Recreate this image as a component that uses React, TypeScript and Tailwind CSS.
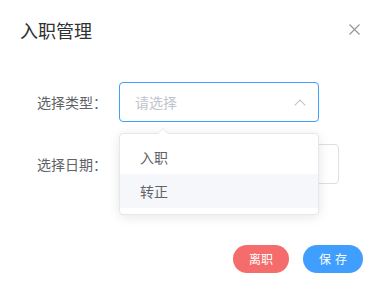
import React from "react";

const font = { fontFamily: '"Noto Sans CJK SC", "Noto Sans", sans-serif' };

export default function App() {
  return (
    <div className="relative w-[382px] h-[292px] bg-white" style={font}>
      {/* HEADER */}
      <div className="flex items-center justify-between pl-5 pr-[22px] pt-[16px] h-[43px]">
        <span className="text-[18px] leading-6 text-[#303133]">入职管理</span>
        <svg width="11" height="11" viewBox="0 0 11 11" className="text-[#909399]">
          <path d="M0.5 0.5 L10.5 10.5 M10.5 0.5 L0.5 10.5" stroke="currentColor" strokeWidth="1.1" />
        </svg>
      </div>

      {/* FORM */}
      <div className="flex flex-col gap-[22px] pl-[19px] pt-[39px]">
        <div className="flex items-center">
          <label className="w-[100px] pr-3 text-right text-sm text-[#606266]">选择类型：</label>
          <div className="w-[200px] h-10 border border-[#409eff] rounded flex items-center justify-between pl-[15px] pr-[12px]">
            <span className="text-sm text-[#c0c4cc]">请选择</span>
            <svg width="12" height="7" viewBox="0 0 12 7" className="text-[#c0c4cc]">
              <path d="M0.7 6.3 L6 1 L11.3 6.3" fill="none" stroke="currentColor" strokeWidth="1.1" />
            </svg>
          </div>
        </div>
        <div className="flex items-center">
          <label className="w-[100px] pr-3 text-right text-sm text-[#606266]">选择日期：</label>
          <div className="w-[220px] h-10 border border-[#dcdfe6] rounded" />
        </div>
      </div>

      {/* FOOTER */}
      <div className="flex justify-end gap-[14px] pr-[19px] pt-[61px]">
        <button className="h-7 w-[56px] rounded-full bg-[#f56c6c] text-white text-xs">离职</button>
        <button className="h-7 w-[60px] pl-[4px] rounded-full bg-[#409eff] text-white text-xs tracking-[4px]">保存</button>
      </div>

      {/* DROPDOWN */}
      <div className="absolute left-[119px] top-[133px] w-[200px] bg-white border border-[#e4e7ed] rounded shadow-[0_2px_12px_0_rgba(0,0,0,0.1)] py-[6px]">
        <div className="absolute -top-[6px] left-[37px] w-0 h-0 border-x-[6px] border-x-transparent border-b-[6px] border-b-[#e4e7ed]" />
        <div className="absolute -top-[5px] left-[37px] w-0 h-0 border-x-[6px] border-x-transparent border-b-[6px] border-b-white" />
        <div className="h-[34px] flex items-center px-5 text-sm text-[#606266]">入职</div>
        <div className="h-[34px] flex items-center px-5 text-sm text-[#606266] bg-[#f5f7fa]">转正</div>
      </div>
    </div>
  );
}
